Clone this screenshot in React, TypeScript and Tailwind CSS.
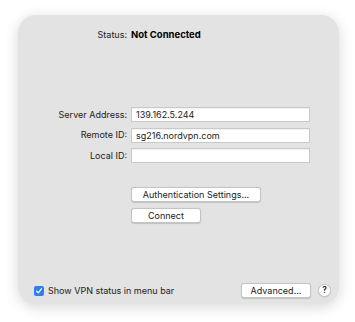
import React from 'react';

// Field row: right-aligned label, then a text field
const FieldRow: React.FC<{ label: string; value?: string }> = ({ label, value }) => (
  <div className="flex items-center">
    <span className="w-[113px] pr-[4px] text-right">{label}</span>
    <div className="h-[15px] w-[179px] border border-[#c9c9c9] bg-white px-[4px] leading-[13px] shadow-[inset_0_1px_0_rgba(0,0,0,0.05)]">
      {value}
    </div>
  </div>
);

const PushButton: React.FC<{ label: string; className?: string }> = ({ label, className = '' }) => (
  <button
    className={`h-[15px] rounded-[3px] border border-[#c4c4c4] bg-white text-center leading-[13px] text-[#222] shadow-[0_0.5px_1px_rgba(0,0,0,0.15)] ${className}`}
  >
    {label}
  </button>
);

export default function App() {
  return (
    <div className="h-[322px] w-[355px] bg-white pl-[18px] pt-[15px] font-['Inter',sans-serif] text-[9px] text-[#222]">
      <div className="flex h-[289px] w-[321px] flex-col rounded-[18px] bg-[#e3e3e3] shadow-[0_3px_14px_rgba(0,0,0,0.16)]">
        {/* Status */}
        <div className="mt-[14px] flex items-center leading-[12px]">
          <span className="w-[113px] pr-[4px] text-right">Status:</span>
          <span className="text-[9.5px] font-bold text-black">Not Connected</span>
        </div>

        {/* Fields */}
        <div className="mt-[66px] flex flex-col gap-[5.5px]">
          <FieldRow label="Server Address:" value="139.162.5.244" />
          <FieldRow label="Remote ID:" value="sg216.nordvpn.com" />
          <FieldRow label="Local ID:" />
        </div>

        {/* Buttons */}
        <div className="ml-[113px] mt-[24px] flex flex-col items-start gap-[6px]">
          <PushButton label="Authentication Settings..." className="w-[130px]" />
          <PushButton label="Connect" className="w-[70px]" />
        </div>

        <div className="flex-1" />

        {/* Bottom bar */}
        <div className="mb-[6px] flex items-center pl-[16px] pr-[8px]">
          <span className="flex h-[10px] w-[10px] items-center justify-center rounded-[2px] bg-[#2f7cf6]">
            <svg width="8" height="8" viewBox="0 0 8 8" fill="none">
              <path d="M1.6 4.2 L3.3 5.9 L6.4 1.8" stroke="white" strokeWidth="1.3" strokeLinecap="round" strokeLinejoin="round" />
            </svg>
          </span>
          <span className="ml-[4px] leading-[12px]">Show VPN status in menu bar</span>
          <div className="flex-1" />
          <PushButton label="Advanced..." className="ml-[1px] w-[70px]" />
          <span className="ml-[7px] flex h-[13px] w-[13px] items-center justify-center rounded-full border border-[#c4c4c4] bg-white text-[8.5px] font-semibold leading-none shadow-[0_0.5px_1px_rgba(0,0,0,0.15)]">
            ?
          </span>
        </div>
      </div>
    </div>
  );
}
